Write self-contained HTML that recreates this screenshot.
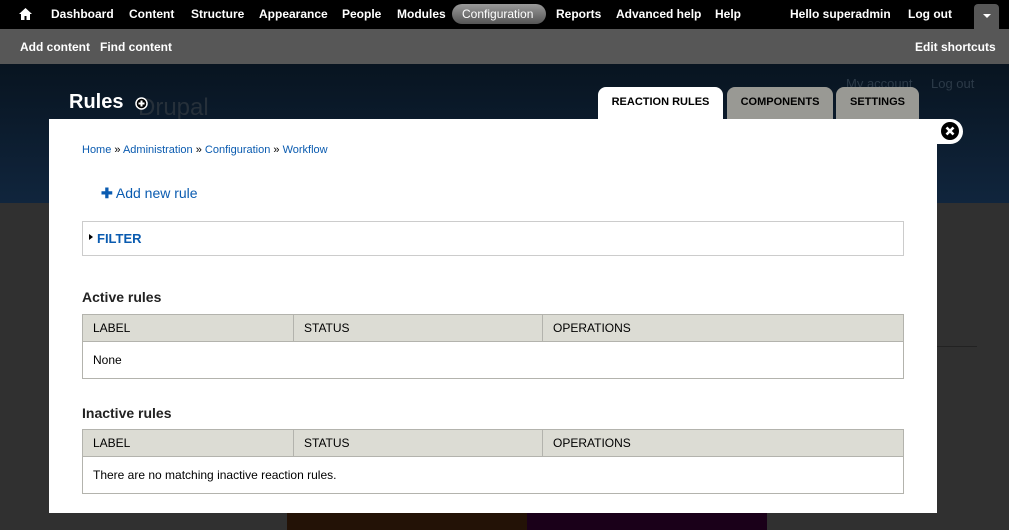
<!DOCTYPE html>
<html><head><style>
*{margin:0;padding:0;box-sizing:border-box}
body{width:1009px;height:530px;overflow:hidden;background:#303030;font-family:"Liberation Sans",sans-serif;position:relative}
.abs{position:absolute}
#top{left:0;top:0;width:1009px;height:29px;background:#000;color:#fff;font-size:12px;font-weight:bold}
#top span{position:absolute;top:7px}
#sc{left:0;top:29px;width:1009px;height:35px;background:#575757;color:#fff;font-size:12px;font-weight:bold}
#sc span{position:absolute;top:11px}
#hdr{left:0;top:64px;width:1009px;height:139px;background:linear-gradient(#081420,#10253d)}
.tab{position:absolute;top:87px;height:32px;border-radius:8px 8px 0 0;font-size:11px;font-weight:bold;text-align:center;line-height:30px;color:#000}
#modal{left:49px;top:119px;width:888px;height:394px;background:#fff}
a{color:#0a5bb0;text-decoration:none}
table{position:absolute;left:82px;width:822px;border-collapse:collapse;font-size:12px}
td,th{border:1px solid #b3b3ad;text-align:left;font-weight:normal;padding-left:10px}
th{background:#dcdcd4;height:27px}
td{height:37px;border-left:1px solid #b3b3ad}
</style></head><body>
<div id="top" class="abs">
<svg style="position:absolute;left:19px;top:8px" width="13" height="12" viewBox="0 0 13 12"><path d="M6.5 0L0 6h2v6h3.5V8h2v4H11V6h2z" fill="#fff"/></svg>
<span style="left:51px">Dashboard</span><span style="left:129px">Content</span><span style="left:191px">Structure</span><span style="left:259px">Appearance</span><span style="left:342px">People</span><span style="left:397px">Modules</span>
<div style="position:absolute;left:452px;top:4px;width:94px;height:20px;border-radius:10px;background:linear-gradient(#999,#555)"></div>
<span style="left:462px;font-weight:normal">Configuration</span><span style="left:556px">Reports</span><span style="left:616px">Advanced help</span><span style="left:715px">Help</span>
<span style="left:790px">Hello superadmin</span><span style="left:908px">Log out</span>
<div style="position:absolute;left:974px;top:4px;width:25px;height:25px;background:#575757;border-radius:4px 4px 0 0"></div>
<div style="position:absolute;left:983px;top:14px;border:4px solid transparent;border-top:4px solid #fff"></div>
</div>
<div id="sc" class="abs"><span style="left:20px">Add content</span><span style="left:100px">Find content</span><span style="left:915px">Edit shortcuts</span></div>
<div id="hdr" class="abs">
<div style="position:absolute;left:138px;top:30px;color:#26303a;font-size:24px">Drupal</div>
<div style="position:absolute;left:69px;top:27px;color:#fff;font-size:20px;font-weight:bold">Rules</div>
<svg style="position:absolute;left:135px;top:33px" width="13" height="13" viewBox="0 0 13 13"><circle cx="6.5" cy="6.5" r="5.5" fill="#000" stroke="#fff" stroke-width="1.5"/><path d="M6.5 3.5v6M3.5 6.5h6" stroke="#fff" stroke-width="2"/></svg>
<div style="position:absolute;left:846px;top:12px;color:#2c3a48;font-size:13px">My account</div>
<div style="position:absolute;left:931px;top:12px;color:#2c3a48;font-size:13px">Log out</div>
</div>
<div class="tab" style="left:598px;width:125px;background:#fff">REACTION RULES</div>
<div class="tab" style="left:727px;width:106px;background:#999994">COMPONENTS</div>
<div class="tab" style="left:836px;width:83px;background:#999994">SETTINGS</div>
<div class="abs" style="left:287px;top:513px;width:240px;height:17px;background:#231206"></div>
<div class="abs" style="left:527px;top:513px;width:240px;height:17px;background:#1a0019"></div>
<div class="abs" style="left:937px;top:346px;width:40px;height:1px;background:#222"></div>
<div id="modal" class="abs"></div>
<div class="abs" style="left:930px;top:119px;width:33px;height:25px;background:#fff;border-radius:0 13px 13px 0"></div>
<svg class="abs" style="left:941px;top:122px" width="18" height="18" viewBox="0 0 18 18"><circle cx="9" cy="9" r="9" fill="#000"/><path d="M5.5 5.5l7 7M12.5 5.5l-7 7" stroke="#fff" stroke-width="2.6"/></svg>
<div class="abs" style="left:82px;top:144px;font-size:11px"><a>Home</a> » <a>Administration</a> » <a>Configuration</a> » <a>Workflow</a></div>
<div class="abs" style="left:101px;top:185px;font-size:14px"><a><b>✚</b> Add new rule</a></div>
<div class="abs" style="left:82px;top:221px;width:822px;height:35px;border:1px solid #ccc"></div>
<div class="abs" style="left:89px;top:234px;border:3px solid transparent;border-left:4px solid #000"></div>
<div class="abs" style="left:97px;top:231px;font-size:13px;font-weight:bold"><a>FILTER</a></div>
<div class="abs" style="left:82px;top:289px;font-size:14px;font-weight:bold;color:#222">Active rules</div>
<table style="top:314px"><tr><th style="width:211px">LABEL</th><th style="width:249px">STATUS</th><th>OPERATIONS</th></tr><tr><td colspan="3">None</td></tr></table>
<div class="abs" style="left:82px;top:405px;font-size:14px;font-weight:bold;color:#222">Inactive rules</div>
<table style="top:429px"><tr><th style="width:211px">LABEL</th><th style="width:249px">STATUS</th><th>OPERATIONS</th></tr><tr><td colspan="3">There are no matching inactive reaction rules.</td></tr></table>
</body></html>
